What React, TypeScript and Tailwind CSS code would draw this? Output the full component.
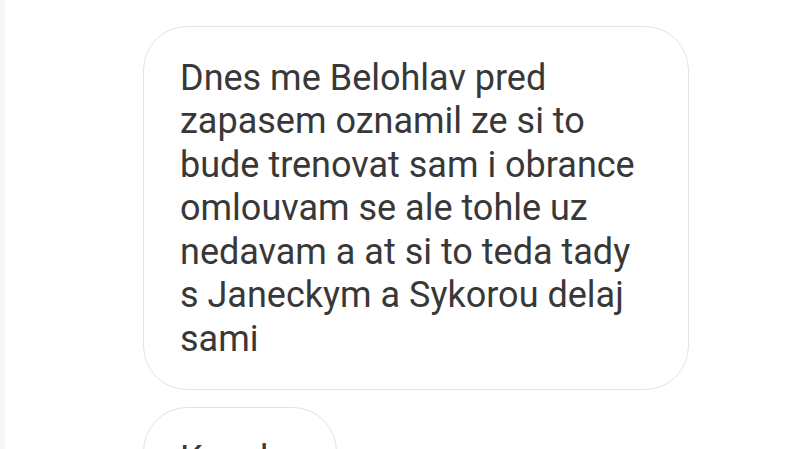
export default function App() {
  const lines = [
    'Dnes me Belohlav pred',
    'zapasem oznamil ze si to',
    'bude trenovat sam i obrance',
    'omlouvam se ale tohle uz',
    'nedavam a at si to teda tady',
    's Janeckym a Sykorou delaj',
    'sami',
  ];

  return (
    <main className="w-[800px] h-[449px] overflow-hidden bg-white flex">
      {/* faint edge of the screenshot */}
      <div className="w-[5px] h-full bg-[#f7f7f7]" />

      <div className="flex flex-col gap-[17px] pl-[138px] pt-[26px] font-['Roboto',sans-serif] text-[36px] leading-[43.5px] text-[#383838]">
        {/* Message bubble */}
        <div className="w-[546px] rounded-[44px] border-[1.5px] border-[#e3e3e3] pl-[36px] pr-[20px] pt-[29.5px] pb-[28px]">
          {lines.map((line) => (
            <div key={line} className="whitespace-nowrap">
              {line}
            </div>
          ))}
        </div>

        {/* Next bubble, cut off */}
        <div className="w-[194px] rounded-[44px] border-[1.5px] border-[#e3e3e3] pl-[36px] pr-[20px] pt-[29.5px] pb-[28px]">
          <div className="whitespace-nowrap">Kecal</div>
        </div>
      </div>
    </main>
  );
}
